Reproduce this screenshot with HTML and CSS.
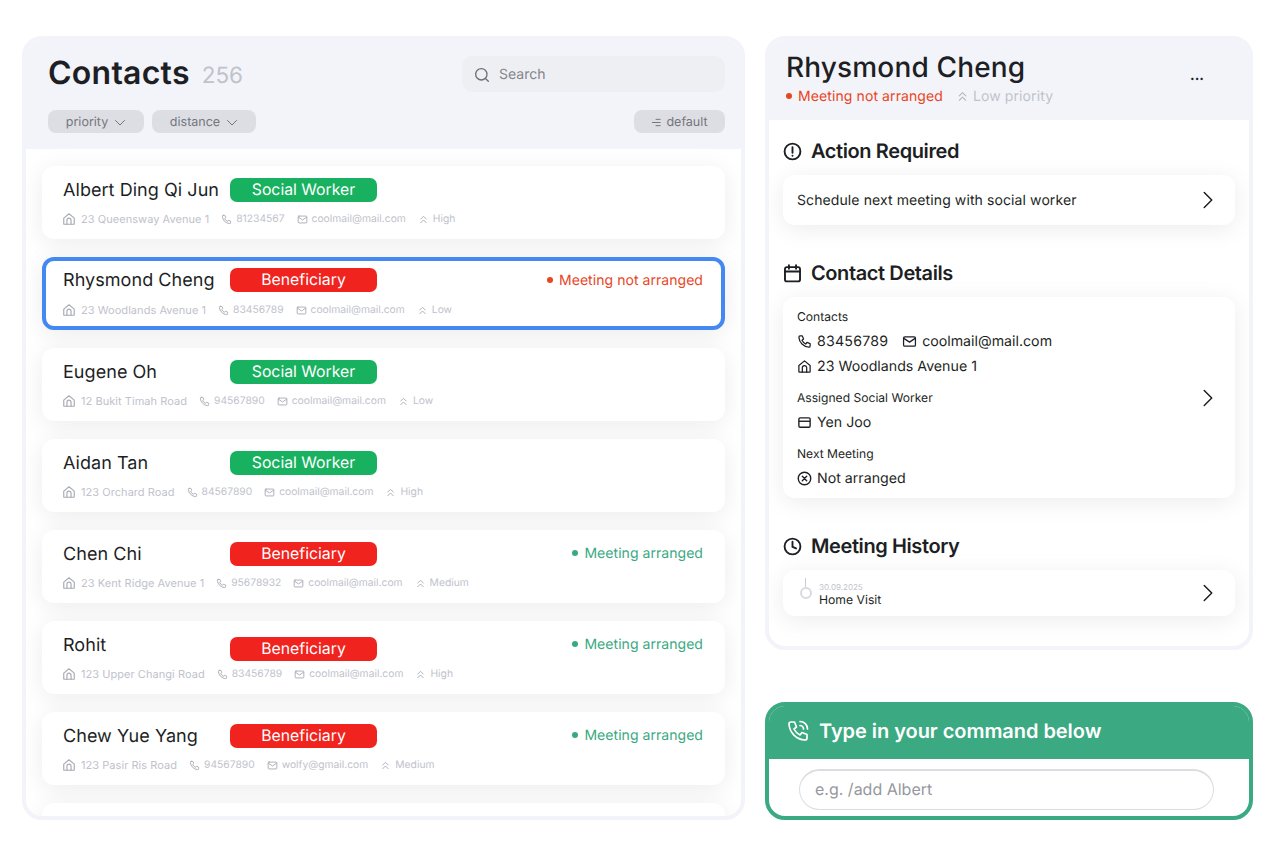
FILE: index.html
```html
<!DOCTYPE html>
<html>
<head>
    <title>Contacts</title>
    <link rel="stylesheet" href="styles.css">
</head>
<body>
    <svg class="defs" width="0" height="0">
        <symbol id="i-home" viewBox="0 0 24 24" fill="none" stroke="currentColor" stroke-width="2" stroke-linecap="round" stroke-linejoin="round">
            <path d="M3 10.5 12 3l9 7.5V20a1 1 0 0 1-1 1H4a1 1 0 0 1-1-1z"/><path d="M8.5 21v-7a3.5 3.5 0 0 1 7 0v7"/>
        </symbol>
        <symbol id="i-phone" viewBox="0 0 24 24" fill="none" stroke="currentColor" stroke-width="2" stroke-linecap="round" stroke-linejoin="round">
            <path d="M5 3h3.5l2 5-2.5 2a13 13 0 0 0 6 6l2-2.5 5 2V19a2 2 0 0 1-2 2A17 17 0 0 1 3 5a2 2 0 0 1 2-2z"/>
        </symbol>
        <symbol id="i-mail" viewBox="0 0 24 24" fill="none" stroke="currentColor" stroke-width="2" stroke-linecap="round" stroke-linejoin="round">
            <rect x="2.5" y="4.5" width="19" height="15" rx="2"/><path d="m3 7 9 6 9-6"/>
        </symbol>
        <symbol id="i-up" viewBox="0 0 24 24" fill="none" stroke="currentColor" stroke-width="2" stroke-linecap="round" stroke-linejoin="round">
            <path d="m6 11 6-6 6 6"/><path d="m6 19 6-6 6 6"/>
        </symbol>
        <symbol id="i-right" viewBox="0 0 24 24" fill="none" stroke="currentColor" stroke-width="2" stroke-linecap="round" stroke-linejoin="round">
            <path d="m7 2 10 10L7 22"/>
        </symbol>
        <symbol id="i-down" viewBox="0 0 24 24" fill="none" stroke="currentColor" stroke-width="2" stroke-linecap="round" stroke-linejoin="round">
            <path d="m3 7 9 9 9-9"/>
        </symbol>
    </svg>

    <div class="page">
        <section class="panel contacts">
            <header class="contacts-head">
                <div class="title-row">
                    <h1>Contacts</h1>
                    <span class="count">256</span>
                    <div class="search">
                        <svg class="search-icon" viewBox="0 0 24 24" fill="none" stroke="currentColor" stroke-width="2" stroke-linecap="round"><circle cx="11" cy="11" r="8.5"/><path d="m17.5 17.5 4 4"/></svg>
                        <span>Search</span>
                    </div>
                </div>
                <div class="filter-row">
                    <button class="chip priority">priority <svg class="chip-arrow"><use href="#i-down"/></svg></button>
                    <button class="chip distance">distance <svg class="chip-arrow"><use href="#i-down"/></svg></button>
                    <button class="chip sort">
                        <svg class="sort-icon" viewBox="0 0 12 10" fill="none" stroke="currentColor" stroke-width="1.1"><path d="M5 1.5h5.5M1 5h9.5M5 8.5h5.5"/></svg>
                        default
                    </button>
                </div>
            </header>

            <div class="list">
                <div class="card">
                    <div class="card-top">
                        <span class="name">Albert Ding Qi Jun</span>
                        <span class="tag worker">Social Worker</span>
                    </div>
                    <div class="meta">
                        <span class="meta-item"><svg class="home"><use href="#i-home"/></svg>23 Queensway Avenue 1</span>
                        <span class="meta-item"><svg><use href="#i-phone"/></svg>81234567</span>
                        <span class="meta-item"><svg><use href="#i-mail"/></svg>coolmail@mail.com</span>
                        <span class="meta-item"><svg><use href="#i-up"/></svg>High</span>
                    </div>
                </div>

                <div class="card selected">
                    <div class="card-top">
                        <span class="name">Rhysmond Cheng</span>
                        <span class="tag beneficiary">Beneficiary</span>
                        <span class="status red">Meeting not arranged</span>
                    </div>
                    <div class="meta">
                        <span class="meta-item"><svg class="home"><use href="#i-home"/></svg>23 Woodlands Avenue 1</span>
                        <span class="meta-item"><svg><use href="#i-phone"/></svg>83456789</span>
                        <span class="meta-item"><svg><use href="#i-mail"/></svg>coolmail@mail.com</span>
                        <span class="meta-item"><svg><use href="#i-up"/></svg>Low</span>
                    </div>
                </div>

                <div class="card">
                    <div class="card-top">
                        <span class="name">Eugene Oh</span>
                        <span class="tag worker">Social Worker</span>
                    </div>
                    <div class="meta">
                        <span class="meta-item"><svg class="home"><use href="#i-home"/></svg>12 Bukit Timah Road</span>
                        <span class="meta-item"><svg><use href="#i-phone"/></svg>94567890</span>
                        <span class="meta-item"><svg><use href="#i-mail"/></svg>coolmail@mail.com</span>
                        <span class="meta-item"><svg><use href="#i-up"/></svg>Low</span>
                    </div>
                </div>

                <div class="card">
                    <div class="card-top">
                        <span class="name">Aidan Tan</span>
                        <span class="tag worker">Social Worker</span>
                    </div>
                    <div class="meta">
                        <span class="meta-item"><svg class="home"><use href="#i-home"/></svg>123 Orchard Road</span>
                        <span class="meta-item"><svg><use href="#i-phone"/></svg>84567890</span>
                        <span class="meta-item"><svg><use href="#i-mail"/></svg>coolmail@mail.com</span>
                        <span class="meta-item"><svg><use href="#i-up"/></svg>High</span>
                    </div>
                </div>

                <div class="card">
                    <div class="card-top">
                        <span class="name">Chen Chi</span>
                        <span class="tag beneficiary">Beneficiary</span>
                        <span class="status green">Meeting arranged</span>
                    </div>
                    <div class="meta">
                        <span class="meta-item"><svg class="home"><use href="#i-home"/></svg>23 Kent Ridge Avenue 1</span>
                        <span class="meta-item"><svg><use href="#i-phone"/></svg>95678932</span>
                        <span class="meta-item"><svg><use href="#i-mail"/></svg>coolmail@mail.com</span>
                        <span class="meta-item"><svg><use href="#i-up"/></svg>Medium</span>
                    </div>
                </div>

                <div class="card">
                    <div class="card-top">
                        <span class="name">Rohit</span>
                        <span class="tag beneficiary low-tag">Beneficiary</span>
                        <span class="status green">Meeting arranged</span>
                    </div>
                    <div class="meta">
                        <span class="meta-item"><svg class="home"><use href="#i-home"/></svg>123 Upper Changi Road</span>
                        <span class="meta-item"><svg><use href="#i-phone"/></svg>83456789</span>
                        <span class="meta-item"><svg><use href="#i-mail"/></svg>coolmail@mail.com</span>
                        <span class="meta-item"><svg><use href="#i-up"/></svg>High</span>
                    </div>
                </div>

                <div class="card">
                    <div class="card-top">
                        <span class="name">Chew Yue Yang</span>
                        <span class="tag beneficiary">Beneficiary</span>
                        <span class="status green">Meeting arranged</span>
                    </div>
                    <div class="meta">
                        <span class="meta-item"><svg class="home"><use href="#i-home"/></svg>123 Pasir Ris Road</span>
                        <span class="meta-item"><svg><use href="#i-phone"/></svg>94567890</span>
                        <span class="meta-item"><svg><use href="#i-mail"/></svg>wolfy@gmail.com</span>
                        <span class="meta-item"><svg><use href="#i-up"/></svg>Medium</span>
                    </div>
                </div>

                <div class="card"></div>
            </div>
        </section>

        <div class="side">
            <section class="panel detail">
                <header class="detail-head">
                    <div class="detail-title">
                        <h2>Rhysmond Cheng</h2>
                        <span class="more">...</span>
                    </div>
                    <div class="detail-sub">
                        <span class="status red">Meeting not arranged</span>
                        <span class="priority-note"><svg><use href="#i-up"/></svg>Low priority</span>
                    </div>
                </header>

                <div class="detail-body">
                    <h3>
                        <svg class="h-icon" viewBox="0 0 24 24" fill="none" stroke="currentColor" stroke-width="2.4" stroke-linecap="round"><circle cx="12" cy="12" r="10"/><path d="M12 6.5v7M12 17.2v.1"/></svg>
                        Action Required
                    </h3>
                    <div class="box action-box">
                        <span>Schedule next meeting with social worker</span>
                        <svg class="go"><use href="#i-right"/></svg>
                    </div>

                    <h3 class="contact-h">
                        <svg class="h-icon" viewBox="0 0 24 24" fill="none" stroke="currentColor" stroke-width="2.4" stroke-linecap="round" stroke-linejoin="round"><rect x="2.5" y="4" width="19" height="18" rx="2.5"/><path d="M2.5 9.5h19M7.5 1.5V6M16.5 1.5V6"/></svg>
                        Contact Details
                    </h3>
                    <div class="box details-box">
                        <div class="details-text">
                            <div class="small-label">Contacts</div>
                            <div class="line">
                                <span class="line-item digits"><svg><use href="#i-phone"/></svg>83456789</span>
                                <span class="line-item"><svg><use href="#i-mail"/></svg>coolmail@mail.com</span>
                            </div>
                            <div class="line">
                                <span class="line-item"><svg><use href="#i-home"/></svg>23 Woodlands Avenue 1</span>
                            </div>
                            <div class="small-label spaced">Assigned Social Worker</div>
                            <div class="line">
                                <span class="line-item">
                                    <svg viewBox="0 0 24 24" fill="none" stroke="currentColor" stroke-width="2.2"><rect x="3" y="4.5" width="18" height="15" rx="2"/><path d="M3 10h18"/></svg>
                                    Yen Joo
                                </span>
                            </div>
                            <div class="small-label spaced">Next Meeting</div>
                            <div class="line">
                                <span class="line-item">
                                    <svg viewBox="0 0 24 24" fill="none" stroke="currentColor" stroke-width="2.2" stroke-linecap="round"><circle cx="12" cy="12" r="10"/><path d="m8.5 8.5 7 7M15.5 8.5l-7 7"/></svg>
                                    Not arranged
                                </span>
                            </div>
                        </div>
                        <svg class="go"><use href="#i-right"/></svg>
                    </div>

                    <h3 class="history-h">
                        <svg class="h-icon" viewBox="0 0 24 24" fill="none" stroke="currentColor" stroke-width="2.4" stroke-linecap="round" stroke-linejoin="round"><circle cx="12" cy="12" r="10"/><path d="M12 6v6.5l4.5 2"/></svg>
                        Meeting History
                    </h3>
                    <div class="box history-box">
                        <div class="timeline"><i class="stem"></i><i class="dot"></i></div>
                        <div class="visit">
                            <div class="visit-date">30.09.2025</div>
                            <div class="visit-name">Home Visit</div>
                        </div>
                        <svg class="go"><use href="#i-right"/></svg>
                    </div>
                </div>
            </section>

            <section class="command">
                <header class="command-head">
                    <svg viewBox="0 0 24 24" fill="none" stroke="currentColor" stroke-width="1.7" stroke-linecap="round" stroke-linejoin="round"><path d="M5 3h3.5l2 5-2.5 2a13 13 0 0 0 6 6l2-2.5 5 2V19a2 2 0 0 1-2 2A17 17 0 0 1 3 5a2 2 0 0 1 2-2z"/><path d="M14 2.5a7.5 7.5 0 0 1 7.5 7.5M14 6.5a3.5 3.5 0 0 1 3.5 3.5"/></svg>
                    Type in your command below
                </header>
                <div class="command-body">
                    <div class="command-input">e.g. /add Albert</div>
                </div>
            </section>
        </div>
    </div>
</body>
</html>
```

FILE: styles.css
```css
* { box-sizing: border-box; }
html, body { margin: 0; height: 844px; overflow: hidden; }
body { font-family: Inter, "Liberation Sans", sans-serif; background-color: #fff; color: #1d1f24; text-rendering: geometricPrecision; }
.defs { position: absolute; }

.page { display: flex; gap: 20px; padding: 36px 27px 0 22px; }
.panel { border: 4px solid #f3f4f9; border-radius: 20px; overflow: hidden; background-color: #fff; }

/* contacts */
.contacts { width: 723px; height: 784px; display: flex; flex-direction: column; }
.contacts-head { background-color: #f3f4f9; height: 109px; padding: 16px 16px 0 22px; flex-shrink: 0; }
.title-row { display: flex; align-items: center; height: 36px; }
h1 { margin: -2px 0 0; font-size: 32px; font-weight: 600; line-height: 36px; letter-spacing: 0.25px; }
.count { font-size: 22.5px; color: #c0c2cc; margin-left: 12px; margin-top: 3px; }
.search { margin-left: auto; width: 263px; height: 36px; background-color: #eeeff2; border-radius: 10px; display: flex; align-items: center; padding: 1px 0 0 12px; font-size: 14px; color: #82858d; }
.search-icon { width: 16px; height: 16px; margin-right: 9px; color: #6c6f76; }
.filter-row { display: flex; gap: 8px; margin-top: 18px; }
.chip { height: 23px; border: 0; border-radius: 8px; background-color: #dddee3; font-family: inherit; font-size: 12.5px; color: #73767e; display: flex; align-items: center; justify-content: center; padding: 2px 0 0; text-rendering: geometricPrecision; }
.priority { width: 96px; }
.distance { width: 104px; }
.sort { width: 91px; margin-left: auto; }
.chip-arrow { width: 12px; height: 12px; margin-left: 6px; color: #73767e; }
.sort-icon { width: 11px; height: 9px; margin-right: 4px; }

.list { flex: 1; overflow: hidden; padding: 17px 16px 0; display: flex; flex-direction: column; gap: 18px; }
.card { flex-shrink: 0; height: 73px; border-radius: 12px; background-color: #fff; box-shadow: 0 4px 24px rgba(0, 0, 0, 0.08); padding: 12px 21px 0; }
.card.selected { border: 4px solid #4488f2; padding: 7px 17px 0; }
.card-top { display: flex; align-items: center; height: 24px; }
.name { width: 167px; font-size: 18px; flex-shrink: 0; letter-spacing: 0.05px; }
.tag { width: 147px; height: 24px; line-height: 24px; border-radius: 7px; text-align: center; color: #fff; font-size: 15.8px; }
.worker { background-color: #18b15f; }
.beneficiary { background-color: #f0231f; }
.low-tag { margin-top: 8px; }
.status { margin-left: auto; margin-right: 1px; font-size: 14px; letter-spacing: 0.05px; display: flex; align-items: center; }
.status::before { content: ""; width: 6px; height: 6px; border-radius: 50%; background-color: currentColor; margin-right: 6px; }
.status.red { color: #e8461f; }
.status.green { color: #3aa981; margin-bottom: 2px; }
.meta { display: flex; gap: 12px; margin-top: 10px; font-size: 11px; letter-spacing: 0.05px; color: #c0c2cc; line-height: 14px; }
.selected .meta { margin-top: 11px; }
.meta-item { display: flex; align-items: center; }
.meta-item + .meta-item { font-size: 10.3px; letter-spacing: 0; }
.meta-item svg { width: 11px; height: 11px; margin-right: 4px; color: #a9abb4; }
.meta-item svg.home { width: 14px; height: 14px; margin-left: -1px; margin-right: 5px; }

/* detail */
.side { width: 488px; display: flex; flex-direction: column; gap: 52px; }
.detail { height: 614px; }
.detail-head { background-color: #f3f4f9; height: 80px; padding: 10px 17px 0; }
.detail-title { display: flex; justify-content: space-between; align-items: center; height: 34px; }
h2 { margin: 0; font-size: 28px; font-weight: 500; line-height: 34px; letter-spacing: 0.15px; }
.more { font-weight: 700; font-size: 14px; margin-right: 28px; margin-top: 16px; }
.detail-sub { display: flex; align-items: center; gap: 13px; margin-top: 2px; height: 20px; }
.detail-sub .status { margin-left: 0; margin-right: 0; letter-spacing: 0.1px; }
.priority-note { display: flex; align-items: center; color: #c0c2cc; font-size: 14px; letter-spacing: 0.1px; }
.priority-note svg { width: 13px; height: 13px; margin-right: 4px; color: #b4b6bf; }

.detail-body { padding: 19px 14px 0; }
h3 { margin: 0; display: flex; align-items: center; gap: 9px; font-size: 20px; font-weight: 600; height: 24px; letter-spacing: -0.4px; }
.h-icon { width: 19px; height: 19px; }
.box { border-radius: 12px; background-color: #fff; box-shadow: 0 4px 24px rgba(0, 0, 0, 0.08); display: flex; align-items: center; font-size: 14px; padding: 0 14px; }
.go { width: 18px; height: 18px; margin-left: auto; margin-right: 4px; color: #1d1f24; flex-shrink: 0; }
.action-box { height: 50px; margin-top: 12px; letter-spacing: 0.1px; }
.contact-h { margin-top: 36px; }
.details-box { height: 201px; margin-top: 12px; }
.details-text { margin-top: 1px; }
.small-label { font-size: 12.1px; line-height: 16px; }
.small-label.spaced { margin-top: 14px; }
.line { display: flex; gap: 14px; margin-top: 8px; font-size: 14.2px; line-height: 18px; }
.line + .line { margin-top: 7px; }
.line-item { display: flex; align-items: center; }
.line-item.digits { letter-spacing: 0.2px; }
.line-item svg { width: 15px; height: 15px; margin-right: 5px; color: #1d1f24; }
.history-h { margin-top: 36px; }
.history-box { height: 46px; margin-top: 12px; padding-left: 16px; }
.timeline { width: 13px; height: 24px; display: flex; flex-direction: column; align-items: center; margin-right: 7px; margin-top: -6px; }
.stem { width: 1px; height: 9px; background-color: #c9cbd3; }
.dot { width: 12px; height: 12px; border: 2px solid #d9dae0; border-radius: 50%; }
.visit { padding-top: 2px; }
.visit-date { font-size: 8px; color: #c0c2cc; line-height: 10px; }
.visit-name { font-size: 12.2px; line-height: 15px; margin-top: 0; }

/* command box */
.command { height: 118px; border: 4px solid #3ba981; border-radius: 20px; overflow: hidden; }
.command-head { background-color: #3ba981; height: 53px; margin: 0; color: #fff; font-size: 20px; font-weight: 600; letter-spacing: -0.05px; display: flex; align-items: center; padding: 0 0 4px 17px; gap: 9px; }
.command-head svg { width: 24px; height: 24px; }
.command-body { padding: 10px 35px 0 30px; }
.command-input { height: 41px; border: 1px solid #dcdde1; border-top-width: 2px; border-radius: 21px; padding-left: 15px; font-size: 16px; line-height: 36px; color: #96989e; }
```
